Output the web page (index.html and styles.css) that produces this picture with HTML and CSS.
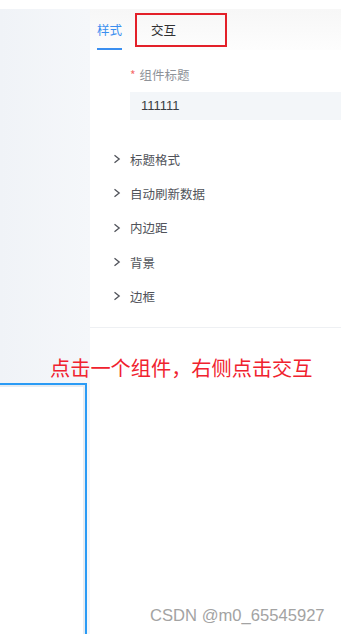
FILE: index.html
```html
<!DOCTYPE html>
<html lang="zh">
<head>
<meta charset="utf-8">
<link rel="stylesheet" href="styles.css">
</head>
<body>
<div class="top"></div>
<div class="main">
  <aside class="left">
    <div class="left-fill"></div>
    <div class="canvas-box"></div>
  </aside>
  <section class="panel">
    <div class="tabs">
      <div class="tab active">样式</div>
      <div class="tab">交互</div>
      <div class="mark-box"></div>
    </div>
    <div class="form">
      <div class="label"><span class="req">*</span>组件标题</div>
      <div class="input">111111</div>
    </div>
    <div class="collapse">
      <div class="row"><svg class="chev" width="8" height="10" viewBox="0 0 8 10"><path d="M1.5 1.2 L6.2 5 L1.5 8.8" fill="none" stroke="#50535a" stroke-width="1.3"/></svg><span>标题格式</span></div>
      <div class="row"><svg class="chev" width="8" height="10" viewBox="0 0 8 10"><path d="M1.5 1.2 L6.2 5 L1.5 8.8" fill="none" stroke="#50535a" stroke-width="1.3"/></svg><span>自动刷新数据</span></div>
      <div class="row"><svg class="chev" width="8" height="10" viewBox="0 0 8 10"><path d="M1.5 1.2 L6.2 5 L1.5 8.8" fill="none" stroke="#50535a" stroke-width="1.3"/></svg><span>内边距</span></div>
      <div class="row"><svg class="chev" width="8" height="10" viewBox="0 0 8 10"><path d="M1.5 1.2 L6.2 5 L1.5 8.8" fill="none" stroke="#50535a" stroke-width="1.3"/></svg><span>背景</span></div>
      <div class="row"><svg class="chev" width="8" height="10" viewBox="0 0 8 10"><path d="M1.5 1.2 L6.2 5 L1.5 8.8" fill="none" stroke="#50535a" stroke-width="1.3"/></svg><span>边框</span></div>
    </div>
    <div class="divider"></div>
  </section>
</div>
<div class="note">点击一个组件，右侧点击交互</div>
<div class="watermark">CSDN @m0_65545927</div>
</body>
</html>
```
FILE: styles.css
```css
* { box-sizing: border-box; }
html, body {
  margin: 0;
  padding: 0;
  width: 341px;
  height: 634px;
  overflow: hidden;
  background: #fff;
  font-family: "Noto Sans CJK SC", "Noto Sans", sans-serif;
  position: relative;
}
.top { height: 9px; background: #fff; }
.main {
  display: flex;
  height: 625px;
}
.left {
  width: 90px;
  flex: none;
  display: flex;
  flex-direction: column;
  background: linear-gradient(to right, #f0f3f7, #f5f7fa);
}
.left-fill { height: 374px; flex: none; }
.canvas-box {
  flex: 1;
  width: 89px;
  margin-left: -2px;
  background: #fff;
  border-top: 2px solid #2a9bf5;
  border-right: 2px solid #2a9bf5;
  box-shadow: inset -2px 2px 0 #e6ecf2;
}
.panel {
  flex: 1;
  background: #fff;
  display: flex;
  flex-direction: column;
}
.tabs {
  position: relative;
  height: 41px;
  display: flex;
  gap: 29px;
  padding-left: 7px;
  background: linear-gradient(to bottom, #f7f7f7, #fdfdfd);
}
.tab {
  font-size: 12.5px;
  line-height: 18px;
  padding-top: 12px;
  color: #303133;
  height: 41px;
}
.tab.active {
  color: #3b8ff0;
  border-bottom: 2px solid #3b8ff0;
  width: 25px;
}
.mark-box {
  position: absolute;
  left: 45px;
  top: 4px;
  width: 92px;
  height: 34px;
  border: 2px solid #e32029;
}
.form {
  padding-left: 40px;
  margin-top: 16px;
}
.label {
  font-size: 12.5px;
  line-height: 18px;
  color: #8e9299;
}
.req {
  color: #f56c6c;
  margin-right: 4px;
  font-size: 12px;
}
.input {
  margin-top: 8px;
  height: 28px;
  background: #f3f6f9;
  padding-left: 11px;
  font-size: 13px;
  line-height: 28px;
  color: #3a3d42;
  font-family: "Liberation Sans", "Noto Sans", sans-serif;
}
.collapse {
  margin-top: 22px;
  display: flex;
  flex-direction: column;
}
.row {
  height: 34.3px;
  display: flex;
  align-items: center;
  padding-left: 23px;
  gap: 9px;
  font-size: 12.5px;
  color: #50535a;
}
.chev { flex: none; }
.divider {
  margin-top: 14px;
  height: 1px;
  background: #eef0f3;
}
.note {
  position: absolute;
  left: 50px;
  top: 355px;
  font-size: 20.2px;
  line-height: 26px;
  color: #f0222e;
  white-space: nowrap;
}
.watermark {
  position: absolute;
  left: 150px;
  top: 605px;
  font-family: "Liberation Sans", "Noto Sans", sans-serif;
  font-size: 16.6px;
  line-height: 22px;
  color: #a3a3a3;
  white-space: nowrap;
}
```
